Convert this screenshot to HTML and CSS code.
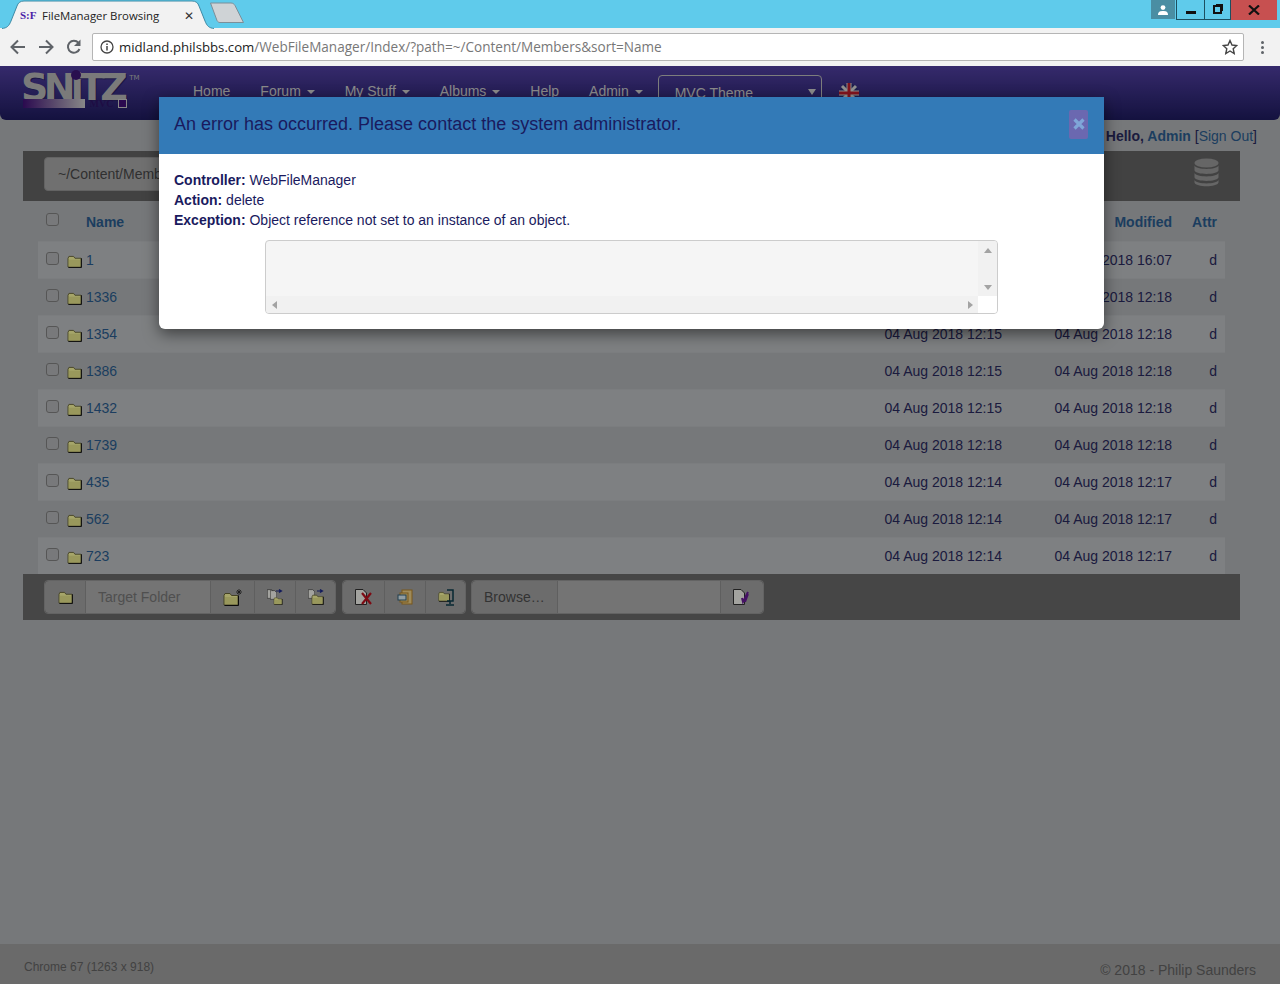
FILE: index.html
```html
<!DOCTYPE html>
<html lang="en">
<head>
  <meta charset="UTF-8">
  <meta name="viewport" content="width=device-width, initial-scale=1.0">
  <title>FileManager Browsing</title>
  <link rel="stylesheet" href="styles.css">
</head>
<body>
  <svg class="defs" width="0" height="0">
    <symbol id="folder" viewBox="0 0 16 14">
      <path d="M1 3.5 L2 1.5 H7 L8.5 3.5 H15 V13 H1 Z" fill="#fffea3" stroke="#6b6838" stroke-width="1"/>
      <path d="M2 5 H14 V12 H2 Z" fill="#ecea8e"/>
      <path d="M15.500 3.500 V13.500 H1.500" fill="none" stroke="#111" stroke-width="1"/>
    </symbol>
    <symbol id="page" viewBox="0 0 12 16">
      <path d="M.5 .5 H8 L11.5 4 V15.5 H.5 Z" fill="#fbfbf5" stroke="#333"/>
    </symbol>
  </svg>

  <!-- browser window -->
  <div class="tabstrip">
    <div class="tab">
      <svg class="tab-shape" width="212" height="29" viewBox="0 0 212 29">
        <path d="M0 28.5 C5 28 7 26 9 21 L15 6 C16 3 18 1 22 1 H190 C194 1 196 3 197 6 L203 21 C205 26 207 28 212 28.5" fill="#f2f2f2" stroke="#3d8aa5"/>
      </svg>
      <span class="favicon">S:F</span>
      <span class="tab-title">FileManager Browsing</span>
      <span class="tab-close">&#10005;</span>
    </div>
    <svg class="new-tab" width="36" height="22" viewBox="0 0 36 22">
      <path d="M1.5 1 H22 C24 1 25 2 26 3.5 L34.5 20.5 H11 C9.500 20.500 9 20 8 18.500 Z" fill="#cfd3d6" stroke="#7b8f99"/>
    </svg>
    <div class="win-controls">
      <span class="win-user">
        <svg width="10" height="10" viewBox="0 0 10 10"><circle cx="5" cy="2.600" r="2.400" fill="#fff"/><path d="M0 10 C0 6.500 2 6 5 6 C8 6 10 6.500 10 10 Z" fill="#fff"/></svg>
      </span>
      <span class="win-btn win-min"><i></i></span>
      <span class="win-btn win-max"><i></i></span>
      <span class="win-btn win-close">
        <svg width="12" height="10" viewBox="0 0 12 10"><path d="M1 .5 L11 9.500 M11 .5 L1 9.500" stroke="#111" stroke-width="2.200"/></svg>
      </span>
    </div>
  </div>

  <div class="toolbar">
    <svg class="nav-icon" width="18" height="18" viewBox="0 0 18 18"><path d="M16 9 H3 M9 2.500 L2.500 9 L9 15.500" fill="none" stroke="#5f6368" stroke-width="2"/></svg>
    <svg class="nav-icon" width="18" height="18" viewBox="0 0 18 18"><path d="M2 9 H15 M9 2.500 L15.500 9 L9 15.500" fill="none" stroke="#5f6368" stroke-width="2"/></svg>
    <svg class="nav-icon" width="18" height="18" viewBox="0 0 18 18"><path d="M14.500 11 A6 6 0 1 1 13.500 4.800" fill="none" stroke="#5f6368" stroke-width="2"/><path d="M15.500 1.500 V8 H9 Z" fill="#5f6368"/></svg>
    <div class="omnibox">
      <svg class="info-icon" width="14" height="14" viewBox="0 0 14 14"><circle cx="7" cy="7" r="6" fill="none" stroke="#444" stroke-width="1.300"/><path d="M7 6 V10.500 M7 3.500 V5" stroke="#444" stroke-width="1.500"/></svg>
      <span class="url"><b>midland.philsbbs.com</b>/WebFileManager/Index/?path=~/Content/Members&amp;sort=Name</span>
      <svg class="star" width="16" height="16" viewBox="0 0 16 16"><path d="M8 1.500 L10 6 L14.800 6.500 L11.200 9.700 L12.200 14.500 L8 12 L3.800 14.500 L4.800 9.700 L1.200 6.500 L6 6 Z" fill="none" stroke="#444" stroke-width="1.400"/></svg>
    </div>
    <span class="kebab"><i></i><i></i><i></i></span>
  </div>

  <!-- page -->
  <div class="page">
    <header class="site-header">
      <div class="logo">
        <div class="logo-word">SNiTZ<sup>TM</sup></div>
        <span class="logo-dot"></span>
        <div class="logo-bar"><span class="logo-fade"></span><span class="logo-mvc">MVC</span><span class="logo-box"></span></div>
      </div>
      <nav class="site-nav">
        <a>Home</a>
        <a>Forum <i class="caret"></i></a>
        <a>My Stuff <i class="caret"></i></a>
        <a>Albums <i class="caret"></i></a>
        <a>Help</a>
        <a>Admin <i class="caret"></i></a>
      </nav>
      <div class="theme-select">MVC Theme<i class="select-arrow"></i></div>
      <svg class="flag" width="20" height="20" viewBox="0 0 20 20">
        <circle cx="10" cy="10" r="9.500" fill="#2b2f72"/>
        <path d="M3 3 L17 17 M17 3 L3 17" stroke="#ddd" stroke-width="3"/>
        <path d="M10 0 V20 M0 10 H20" stroke="#ddd" stroke-width="5"/>
        <path d="M10 0 V20 M0 10 H20" stroke="#c8202f" stroke-width="3"/>
      </svg>
    </header>

    <div class="hello"><b>Hello, <a>Admin</a></b> [<a>Sign Out</a>]</div>

    <div class="path-bar">
      <div class="path-input">~/Content/Members</div>
      <svg class="db-icon" width="25" height="29" viewBox="0 0 25 29">
        <ellipse cx="12.500" cy="5" rx="12" ry="4.500" fill="#9d9d9d"/>
        <path d="M.5 7.500 C2 12 23 12 24.500 7.500 V12.500 C23 17 2 17 .5 12.500 Z" fill="#9d9d9d"/>
        <path d="M.5 15 C2 19.500 23 19.500 24.500 15 V19.500 C23 24 2 24 .5 19.500 Z" fill="#9d9d9d"/>
        <path d="M.5 22 C2 26.500 23 26.500 24.500 22 V24.500 C23 29.500 2 29.500 .5 24.500 Z" fill="#9d9d9d"/>
      </svg>
    </div>

    <div class="file-table">
      <div class="file-row file-head">
        <input type="checkbox" class="check">
        <span class="cell-name">Name</span>
        <span class="cell-date">Created</span>
        <span class="cell-date">Modified</span>
        <span class="cell-attr">Attr</span>
      </div>
      <div class="file-row"><input type="checkbox" class="check"><span class="cell-name"><svg class="folder"><use href="#folder"/></svg><a>1</a></span><span class="cell-date">04 Aug 2018 12:15</span><span class="cell-date">04 Aug 2018 16:07</span><span class="cell-attr">d</span></div>
      <div class="file-row"><input type="checkbox" class="check"><span class="cell-name"><svg class="folder"><use href="#folder"/></svg><a>1336</a></span><span class="cell-date">04 Aug 2018 12:15</span><span class="cell-date">04 Aug 2018 12:18</span><span class="cell-attr">d</span></div>
      <div class="file-row"><input type="checkbox" class="check"><span class="cell-name"><svg class="folder"><use href="#folder"/></svg><a>1354</a></span><span class="cell-date">04 Aug 2018 12:15</span><span class="cell-date">04 Aug 2018 12:18</span><span class="cell-attr">d</span></div>
      <div class="file-row"><input type="checkbox" class="check"><span class="cell-name"><svg class="folder"><use href="#folder"/></svg><a>1386</a></span><span class="cell-date">04 Aug 2018 12:15</span><span class="cell-date">04 Aug 2018 12:18</span><span class="cell-attr">d</span></div>
      <div class="file-row"><input type="checkbox" class="check"><span class="cell-name"><svg class="folder"><use href="#folder"/></svg><a>1432</a></span><span class="cell-date">04 Aug 2018 12:15</span><span class="cell-date">04 Aug 2018 12:18</span><span class="cell-attr">d</span></div>
      <div class="file-row"><input type="checkbox" class="check"><span class="cell-name"><svg class="folder"><use href="#folder"/></svg><a>1739</a></span><span class="cell-date">04 Aug 2018 12:18</span><span class="cell-date">04 Aug 2018 12:18</span><span class="cell-attr">d</span></div>
      <div class="file-row"><input type="checkbox" class="check"><span class="cell-name"><svg class="folder"><use href="#folder"/></svg><a>435</a></span><span class="cell-date">04 Aug 2018 12:14</span><span class="cell-date">04 Aug 2018 12:17</span><span class="cell-attr">d</span></div>
      <div class="file-row"><input type="checkbox" class="check"><span class="cell-name"><svg class="folder"><use href="#folder"/></svg><a>562</a></span><span class="cell-date">04 Aug 2018 12:14</span><span class="cell-date">04 Aug 2018 12:17</span><span class="cell-attr">d</span></div>
      <div class="file-row"><input type="checkbox" class="check"><span class="cell-name"><svg class="folder"><use href="#folder"/></svg><a>723</a></span><span class="cell-date">04 Aug 2018 12:14</span><span class="cell-date">04 Aug 2018 12:17</span><span class="cell-attr">d</span></div>
    </div>

    <div class="action-bar">
      <div class="btn-group">
        <span class="addon w40"><svg class="tool" viewBox="0 0 16 14"><use href="#folder"/></svg></span>
        <span class="addon field target">Target Folder</span>
        <span class="addon w44">
          <svg class="tool-lg" width="20" height="18" viewBox="0 0 20 18">
            <use href="#folder" x="0" y="4" width="16" height="14"/>
            <path d="M16 1 V7 M13 4 H19 M14 2 L18 6 M18 2 L14 6" stroke="#222" stroke-width=".8"/>
          </svg>
        </span>
        <span class="addon w41">
          <svg class="tool-lg" width="16" height="16" viewBox="0 0 16 16">
            <use href="#page" x="0" y="0" width="7" height="10"/><use href="#page" x="3" y="1" width="7" height="10"/>
            <use href="#folder" x="6" y="8" width="10" height="8"/>
            <path d="M9 2 H14 M12 .5 L14.500 2 L12 3.500" stroke="#1d2a8c" fill="none" stroke-width="1.200"/>
          </svg>
        </span>
        <span class="addon w40">
          <svg class="tool-lg" width="16" height="16" viewBox="0 0 16 16">
            <use href="#page" x="0" y="0" width="7" height="10"/>
            <use href="#folder" x="3" y="5" width="13" height="11"/>
            <path d="M9 2 H14 M12 .5 L14.500 2 L12 3.500" stroke="#1d2a8c" fill="none" stroke-width="1.200"/>
          </svg>
        </span>
      </div>
      <div class="btn-group">
        <span class="addon w41">
          <svg class="tool-lg" width="18" height="16" viewBox="0 0 18 16">
            <use href="#page" x="0" y="0" width="12" height="16"/>
            <path d="M7 4 L16 15 M16 4 L7 15" stroke="#c1121f" stroke-width="2.200"/>
          </svg>
        </span>
        <span class="addon w41">
          <svg class="tool-lg" width="16" height="16" viewBox="0 0 16 16">
            <rect x="5" y="1" width="10" height="14" fill="#f5d68a" stroke="#b8862b"/>
            <rect x="3" y="4" width="8" height="9" fill="#f5d68a" stroke="#b8862b"/>
            <rect x="1" y="6" width="8" height="5" fill="#dff1f7" stroke="#33607a"/>
          </svg>
        </span>
        <span class="addon w40">
          <svg class="tool-lg" width="16" height="17" viewBox="0 0 16 17">
            <use href="#folder" x="0" y="2" width="12" height="11"/>
            <path d="M9 1 H15 V12 H9 M12 12 V15 M8 16 H16" fill="none" stroke="#0a3d4d" stroke-width="1.500"/>
          </svg>
        </span>
      </div>
      <div class="btn-group upload-group">
        <span class="addon browse">Browse&hellip;</span>
        <span class="addon field upload"></span>
        <span class="addon w43">
          <svg class="tool-lg" width="18" height="16" viewBox="0 0 18 16">
            <use href="#page" x="0" y="0" width="12" height="16"/>
            <path d="M15 3 L10 13 L9 9 M15 5 L12 13" stroke="#6a1b9a" fill="none" stroke-width="2"/>
          </svg>
        </span>
      </div>
    </div>

    <footer class="site-footer">
      <span class="browser-info">Chrome 67 (1263 x 918)</span>
      <span class="copyright">&copy; 2018 - Philip Saunders</span>
    </footer>

    <div class="backdrop"></div>

    <div class="modal">
      <div class="modal-head">
        <h4>An error has occurred. Please contact the system administrator.</h4>
        <span class="modal-close">
          <svg width="12" height="12" viewBox="0 0 12 12"><path d="M1.500 1.500 L10.500 10.500 M10.500 1.500 L1.500 10.500" stroke="#7fa6d8" stroke-width="3.200"/></svg>
        </span>
      </div>
      <div class="modal-body">
        <div><b>Controller:</b> WebFileManager</div>
        <div><b>Action:</b> delete</div>
        <div><b>Exception:</b> Object reference not set to an instance of an object.</div>
        <div class="trace">
          <div class="trace-top">
            <div class="trace-text"></div>
            <div class="scroll-v"><i class="arr-up"></i><i class="arr-down"></i></div>
          </div>
          <div class="trace-bottom">
            <div class="scroll-h"><i class="arr-left"></i><i class="arr-right"></i></div>
            <div class="scroll-corner"></div>
          </div>
        </div>
      </div>
    </div>
  </div>
</body>
</html>
```

FILE: styles.css
```css
* {
  box-sizing: border-box;
}
html, body {
  height: 100%;
}
body {
  margin: 0;
  font-family: "Liberation Sans", Arial, sans-serif;
  font-size: 14px;
  color: #2a2a60;
  background: #b6b9bc;
  overflow: hidden;
}
a {
  color: #2c5f92;
  text-decoration: none;
}
.defs {
  position: absolute;
}

/* browser chrome */
.tabstrip {
  display: flex;
  height: 28px;
  background: #5fcbeb;
  padding-left: 2px;
}
.tab {
  position: relative;
  width: 212px;
  height: 29px;
  display: flex;
  align-items: center;
  padding: 1px 0 0 18px;
  font-family: "Open Sans", sans-serif;
  font-size: 11.4px;
  color: #222;
}
.tab-shape {
  position: absolute;
  left: 0;
  top: 0;
}
.favicon, .tab-title, .tab-close {
  position: relative;
}
.favicon {
  width: 22px;
  font-family: "Liberation Serif", serif;
  font-weight: bold;
  font-size: 11px;
  color: #4b1fa8;
}
.tab-title {
  flex: 1;
}
.tab-close {
  width: 30px;
  font-size: 12px;
  color: #333;
}
.new-tab {
  margin: 2px 0 0 -5px;
}
.win-controls {
  margin-left: auto;
  margin-right: 3px;
  display: flex;
  align-items: flex-start;
  height: 20px;
}
.win-user {
  width: 24px;
  height: 19px;
  margin-right: 1px;
  background: #4a8ea3;
  display: flex;
  align-items: center;
  justify-content: center;
}
.win-btn {
  height: 20px;
  display: flex;
  align-items: center;
  justify-content: center;
  border: 1px solid #1c4f60;
  border-top: none;
  border-left-width: 1px;
}
.win-min {
  width: 29px;
}
.win-min i {
  width: 10px;
  height: 3px;
  margin-top: 5px;
  background: #111;
}
.win-max {
  width: 26px;
  border-left: none;
}
.win-max i {
  width: 9px;
  height: 9px;
  border: 2px solid #111;
  box-shadow: 2px -2px 0 -1px #111;
}
.win-close {
  width: 46px;
  background: #c75050;
  border: none;
}
.toolbar {
  height: 38px;
  background: #f2f2f2;
  display: flex;
  align-items: center;
  padding: 0 11px 0 9px;
  gap: 10px;
}
.omnibox {
  width: 1152px;
  height: 28px;
  margin-left: -1px;
  flex: none;
  background: #fff;
  border: 1px solid #b5b5b5;
  border-radius: 2px;
  display: flex;
  align-items: center;
  padding: 0 5px 0 7px;
  font-family: "Open Sans", sans-serif;
  font-size: 13.56px;
  color: #777;
}
.url {
  flex: 1;
  margin-left: 5px;
  white-space: nowrap;
}
.url b {
  font-weight: normal;
  font-size: 13.2px;
  color: #222;
}
.kebab {
  display: flex;
  flex-direction: column;
  gap: 2px;
  margin-left: 7px;
}
.kebab i {
  width: 3px;
  height: 3px;
  border-radius: 50%;
  background: #5f6368;
}

/* site */
.page {
  position: relative;
  height: 918px;
  display: flex;
  flex-direction: column;
  overflow: hidden;
}
.site-header {
  height: 54px;
  flex: none;
  display: flex;
  align-items: flex-start;
  background: linear-gradient(#5341a6, #1f1c61);
  border-radius: 0 0 6px 6px;
  padding-left: 23px;
  position: relative;
}
.logo {
  width: 155px;
  flex: none;
  padding-top: 4px;
  position: relative;
}
.logo-word {
  height: 29px;
  margin-left: -2px;
  font-family: "DejaVu Sans", sans-serif;
  font-weight: bold;
  font-size: 38px;
  line-height: 34px;
  letter-spacing: -4.700px;
  color: #bcbcbc;
  text-shadow: 1px 1px 0 #2a2468;
  white-space: nowrap;
}
.logo-word sup {
  font-size: 7px;
  font-weight: normal;
  vertical-align: 20px;
  line-height: 0;
  letter-spacing: 0;
  margin-left: 6px;
  text-shadow: none;
}
.logo-dot {
  position: absolute;
  left: 48px;
  top: 4px;
  width: 10px;
  height: 10px;
  border-radius: 50%;
  background: #40187a;
}
.logo-bar {
  position: relative;
  display: flex;
  align-items: center;
  width: 104px;
  height: 9px;
}
.logo-fade {
  width: 62px;
  height: 9px;
  background: linear-gradient(to right, #42107a, #d0d0d0);
}
.logo-mvc {
  flex: 1;
  text-align: center;
  font-family: "Liberation Serif", serif;
  font-weight: bold;
  font-size: 10px;
  color: #2e1468;
}
.logo-box {
  width: 9px;
  height: 9px;
  background: #42107a;
  border: 1px solid #d0d0d0;
}
.site-nav {
  display: flex;
  margin-top: 15px;
  line-height: 20px;
}
.site-nav a {
  padding: 0 15px;
  color: #d5d5d5;
}
.caret {
  display: inline-block;
  vertical-align: middle;
  margin-left: 2px;
  border-top: 4px solid #d5d5d5;
  border-left: 4px solid transparent;
  border-right: 4px solid transparent;
}
.theme-select {
  width: 164px;
  height: 34px;
  margin-top: 9px;
  padding: 8px 16px;
  border: 1px solid #c0c0c0;
  border-radius: 4px;
  color: #d5d5d5;
  line-height: 18px;
  position: relative;
}
.select-arrow {
  position: absolute;
  right: 5px;
  top: 13px;
  border-top: 6px solid #d5d5d5;
  border-left: 4px solid transparent;
  border-right: 4px solid transparent;
}
.flag {
  margin: 17px 0 0 17px;
}
.hello {
  height: 31px;
  flex: none;
  padding: 6px 23px 0 0;
  text-align: right;
  line-height: 20px;
}
.path-bar {
  height: 50px;
  flex: none;
  margin: 0 40px 0 23px;
  padding: 6px 21px;
  background: #666;
  display: flex;
  justify-content: space-between;
  align-items: flex-start;
}
.path-input {
  width: 600px;
  height: 34px;
  padding: 6px 13px;
  background: #adadad;
  border: 1px solid #999;
  border-radius: 4px;
  color: #4a4a4a;
  line-height: 20px;
}
.db-icon {
  margin-top: 1px;
}

/* file list */
.file-table {
  margin: 0 55px 0 38px;
  flex: none;
}
.file-row {
  display: grid;
  grid-template-columns: 29px 1fr 120px 170px 45px;
  align-items: center;
  height: 37px;
  padding-right: 8px;
  border-top: 1px solid #bdc0c3;
}
.file-row:nth-child(even) {
  background: #c2c5c8;
}
.file-head {
  height: 40px;
  padding-top: 1px;
  border-top: none;
  font-weight: bold;
  color: #2c5f92;
}
.check {
  appearance: none;
  width: 13px;
  height: 13px;
  margin: -4px 0 0 8px;
  background: #b9bbbd;
  border: 1px solid #858585;
  border-radius: 3px;
}
.cell-name {
  display: flex;
  align-items: center;
}
.file-head .cell-name {
  padding-left: 19px;
}
.cell-name a {
  margin-left: 4px;
}
.folder {
  width: 15px;
  height: 13px;
  margin-top: 3px;
}
.cell-date, .cell-attr {
  text-align: right;
  white-space: nowrap;
}
.file-head .cell-date:nth-child(3) {
  visibility: hidden;
}

/* action bar */
.action-bar {
  height: 46px;
  flex: none;
  margin: 0 40px 0 23px;
  padding: 6px 21px;
  background: #6c6c6c;
  display: flex;
  gap: 6px;
}
.btn-group {
  display: flex;
  height: 34px;
  border: 1px solid #999;
  border-radius: 4px;
}
.upload-group {
  margin-left: -1px;
}
.addon {
  display: flex;
  align-items: center;
  justify-content: center;
  border-left: 1px solid #939393;
  background: #a6a6a6;
  color: #4f4f4f;
}
.addon:first-child {
  border-left: none;
  border-radius: 4px 0 0 4px;
}
.addon:last-child {
  border-radius: 0 4px 4px 0;
}
.w40 { width: 40px; }
.w41 { width: 41px; }
.w43 { width: 43px; }
.w44 { width: 44px; }
.field {
  background: #b2b2b2;
}
.target {
  width: 125px;
  justify-content: flex-start;
  padding-left: 12px;
  color: #7a7a7a;
}
.tool {
  width: 15px;
  height: 13px;
}
.browse {
  width: 85px;
  justify-content: flex-start;
  padding-left: 12px;
}
.upload {
  width: 163px;
}

/* footer */
.site-footer {
  margin-top: auto;
  height: 40px;
  flex: none;
  background: #a3a3a3;
  display: flex;
  justify-content: space-between;
  padding: 16px 24px 0;
  color: #666;
}
.browser-info {
  font-size: 12px;
  line-height: 14px;
}
.copyright {
  line-height: 20px;
}

/* error dialog */
.backdrop {
  position: absolute;
  inset: 0;
  background: rgba(0, 0, 0, 0.35);
}
.modal {
  position: absolute;
  left: 159px;
  top: 31px;
  width: 945px;
  height: 232px;
  background: #fff;
  color: #1a1a5e;
  border-radius: 0 0 6px 6px;
  box-shadow: 0 5px 15px rgba(0, 0, 0, 0.5);
}
.modal-head {
  height: 57px;
  background: #337ab7;
  display: flex;
  align-items: center;
  justify-content: space-between;
  padding: 0 16px 3px 15px;
}
.modal-head h4 {
  margin: 0;
  font-size: 18px;
  font-weight: normal;
}
.modal-close {
  width: 19px;
  height: 29px;
  border-radius: 2px;
  background: #6b68b0;
  display: flex;
  align-items: center;
  justify-content: center;
}
.modal-body {
  padding: 16px 15px 0;
  line-height: 20px;
}
.trace {
  width: 733px;
  height: 74px;
  margin: 10px 0 0 91px;
  border: 1px solid #ccc;
  border-radius: 4px;
  overflow: hidden;
  background: #f5f5f5;
}
.trace-top {
  display: flex;
  height: 55px;
}
.trace-text {
  flex: 1;
}
.scroll-v {
  width: 19px;
  background: #f1f1f1;
  display: flex;
  flex-direction: column;
  justify-content: space-between;
  align-items: center;
  padding: 7px 0 6px;
}
.trace-bottom {
  display: flex;
  height: 17px;
}
.scroll-h {
  flex: 1;
  background: #f1f1f1;
  display: flex;
  justify-content: space-between;
  align-items: center;
  padding: 0 5px 0 6px;
}
.scroll-corner {
  width: 19px;
  background: #fff;
}
.arr-up, .arr-down {
  border-left: 4px solid transparent;
  border-right: 4px solid transparent;
}
.arr-up { border-bottom: 5px solid #a3a3a3; }
.arr-down { border-top: 5px solid #a3a3a3; }
.arr-left, .arr-right {
  border-top: 4px solid transparent;
  border-bottom: 4px solid transparent;
}
.arr-left { border-right: 5px solid #a3a3a3; }
.arr-right { border-left: 5px solid #a3a3a3; }
```
